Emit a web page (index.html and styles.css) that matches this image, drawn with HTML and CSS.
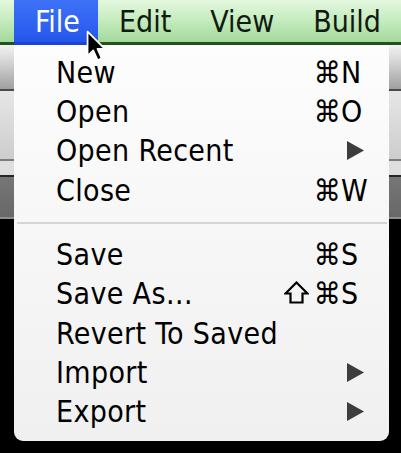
FILE: index.html
```html
<!DOCTYPE html>
<html>
<head>
<meta charset="utf-8">
<link rel="stylesheet" href="styles.css">
</head>
<body>
<div class="screen">
  <div class="menubar">
    <span class="title active">File</span><span class="title">Edit</span><span class="title">View</span><span class="title">Build</span>
  </div>
  <div class="window">
    <div class="strip s1"></div>
    <div class="line l1"></div>
    <div class="strip s2"></div>
    <div class="line l2"></div>
    <div class="strip s3"></div>
    <div class="line l3"></div>
    <div class="strip s4"></div>
    <div class="line l4"></div>
  </div>
  <div class="menu">
    <div class="item"><span class="label">New</span><span class="mods">⌘</span><span class="key">N</span></div>
    <div class="item"><span class="label">Open</span><span class="mods">⌘</span><span class="key">O</span></div>
    <div class="item"><span class="label">Open Recent</span><span class="mods"></span><span class="key"><svg class="arrow" viewBox="0 0 17 19" width="17" height="19"><path d="M0 0 L17 9.5 L0 19 Z"/></svg></span></div>
    <div class="item"><span class="label">Close</span><span class="mods">⌘</span><span class="key">W</span></div>
    <div class="sep"></div>
    <div class="item"><span class="label">Save</span><span class="mods">⌘</span><span class="key">S</span></div>
    <div class="item"><span class="label">Save As…</span><span class="mods"><svg class="shift" viewBox="0 0 25 23" width="25" height="23"><path d="M12.5 1.5 L23.5 12.5 L18.5 12.5 L18.5 21.5 L6.5 21.5 L6.5 12.5 L1.5 12.5 Z"/></svg>⌘</span><span class="key">S</span></div>
    <div class="item"><span class="label">Revert To Saved</span><span class="mods"></span><span class="key"></span></div>
    <div class="item"><span class="label">Import</span><span class="mods"></span><span class="key"><svg class="arrow" viewBox="0 0 17 19" width="17" height="19"><path d="M0 0 L17 9.5 L0 19 Z"/></svg></span></div>
    <div class="item"><span class="label">Export</span><span class="mods"></span><span class="key"><svg class="arrow" viewBox="0 0 17 19" width="17" height="19"><path d="M0 0 L17 9.5 L0 19 Z"/></svg></span></div>
  </div>
  <svg class="cursor" viewBox="0 0 14 21" width="22" height="33"><path d="M1 1 L1 16.5 L4.6 13 L7.4 19.2 L10 18 L7.3 12 L12 12 Z" fill="#000" stroke="#fff" stroke-width="1.1" stroke-linejoin="round"/></svg>
</div>
</body>
</html>
```

FILE: styles.css
```css
html, body {
  margin: 0;
  padding: 0;
  background: #000;
}
.screen {
  position: relative;
  width: 401px;
  height: 453px;
  overflow: hidden;
  background: #000;
  font-family: "DejaVu Sans Condensed", "DejaVu Sans", sans-serif;
  font-stretch: condensed;
  font-size: 30px;
}
.menubar {
  display: flex;
  height: 42px;
  padding-left: 14px;
  background: linear-gradient(#e4f8df, #c4ebbd 50%, #a3d99b);
  border-bottom: 3px solid #24521f;
}
.title {
  padding: 0 18px 0 21px;
  line-height: 44px;
  color: #111a10;
}
.title.active {
  color: #fff;
  height: 45px;
  background: linear-gradient(#3d72f7, #2b5ef0 70%, #2250e6);
  box-shadow: inset 0 -3px 0 #1b43d6;
}
.window {
  display: flex;
  flex-direction: column;
}
.strip.s1 { height: 44px; background: linear-gradient(#f2f2f2, #dcdcdc 30%, #a0a0a0); }
.line.l1 { height: 2px; background: #4a4a4a; }
.strip.s2 { height: 68px; background: linear-gradient(#e6e6e6, #cdcdcd); }
.line.l2 { height: 2px; background: #7c7c7c; }
.strip.s3 { height: 14px; background: #dedede; }
.line.l3 { height: 2px; background: #262626; }
.strip.s4 { height: 40px; background: linear-gradient(#767676, #686868); }
.line.l4 { height: 2px; background: #8e8e8e; }

.menu {
  position: absolute;
  left: 14px;
  top: 45px;
  width: 375px;
  height: 396px;
  box-sizing: border-box;
  padding: 7.7px 0 9.5px;
  border-radius: 0 0 9px 9px;
  background: linear-gradient(#fdfdfd, #f7f7f7 45%, #f0f0f0);
  color: #000;
  letter-spacing: 0.35px;
}
.item {
  display: grid;
  grid-template-columns: 1fr 62px 46px;
  height: 39.3px;
  line-height: 39.3px;
  padding: 0 2px 0 42px;
  white-space: nowrap;
}
.mods {
  display: flex;
  justify-content: flex-end;
  align-items: center;
}
.key {
  display: flex;
  align-items: center;
}
.shift {
  margin-right: 5px;
  margin-top: -3px;
  fill: none;
  stroke: #000;
  stroke-width: 2.2;
  stroke-linejoin: miter;
}
.arrow {
  margin-left: 6px;
  fill: #3d3d3d;
}
.sep {
  height: 2px;
  margin: 12.4px 2px 10.7px 3px;
  background: #d5d5d5;
}
.cursor {
  position: absolute;
  left: 86px;
  top: 30px;
}
```
